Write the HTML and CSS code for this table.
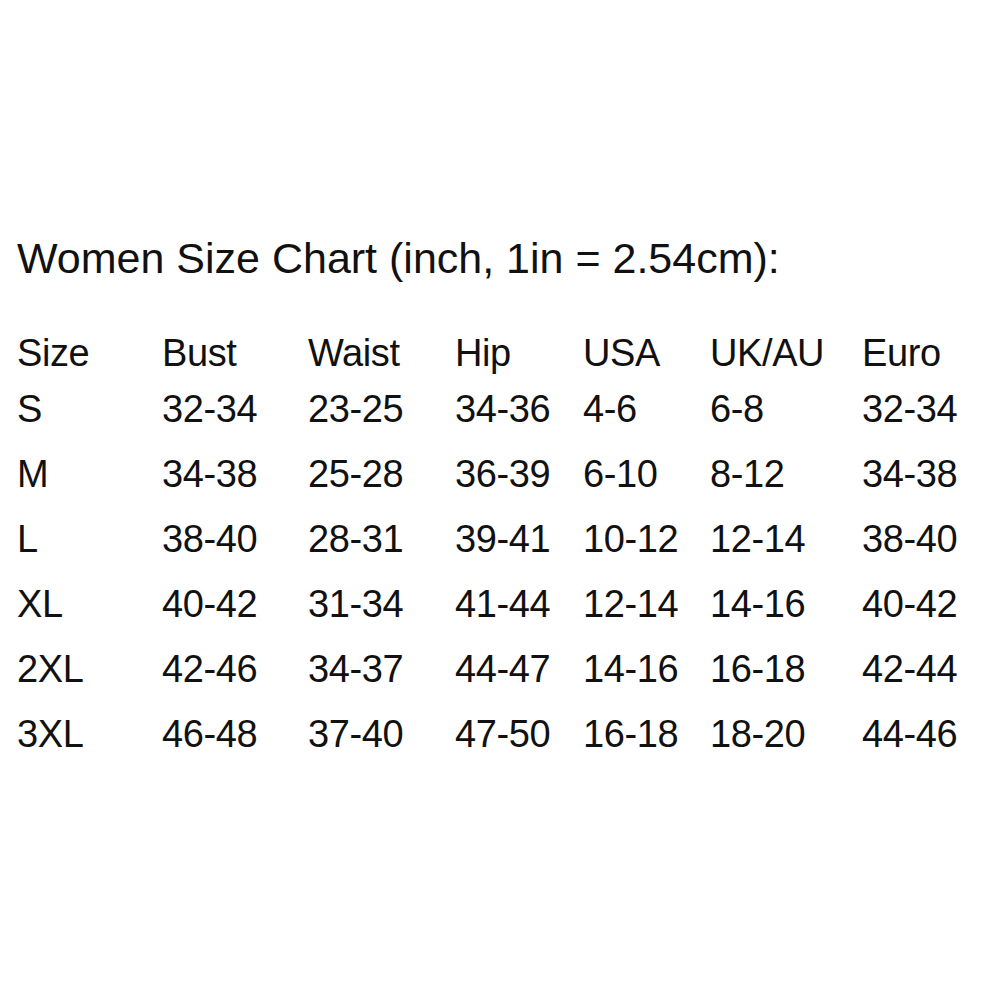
FILE: index.html
```html
<!DOCTYPE html>
<html>
<head>
<meta charset="utf-8">
<link rel="stylesheet" href="styles.css">
</head>
<body>
<div class="page">
  <h1 class="title">Women Size Chart (inch, 1in = 2.54cm):</h1>
  <div class="chart">
    <div class="row head"><span>Size</span><span>Bust</span><span>Waist</span><span>Hip</span><span>USA</span><span>UK/AU</span><span>Euro</span></div>
    <div class="row"><span>S</span><span>32-34</span><span>23-25</span><span>34-36</span><span>4-6</span><span>6-8</span><span>32-34</span></div>
    <div class="row"><span>M</span><span>34-38</span><span>25-28</span><span>36-39</span><span>6-10</span><span>8-12</span><span>34-38</span></div>
    <div class="row"><span>L</span><span>38-40</span><span>28-31</span><span>39-41</span><span>10-12</span><span>12-14</span><span>38-40</span></div>
    <div class="row"><span>XL</span><span>40-42</span><span>31-34</span><span>41-44</span><span>12-14</span><span>14-16</span><span>40-42</span></div>
    <div class="row"><span>2XL</span><span>42-46</span><span>34-37</span><span>44-47</span><span>14-16</span><span>16-18</span><span>42-44</span></div>
    <div class="row"><span>3XL</span><span>46-48</span><span>37-40</span><span>47-50</span><span>16-18</span><span>18-20</span><span>44-46</span></div>
  </div>
</div>
</body>
</html>
```

FILE: styles.css
```css
html, body {
  margin: 0;
  padding: 0;
  background: #ffffff;
}
.page {
  padding: 237px 0 0 17px;
  font-family: "Liberation Sans", Arial, sans-serif;
  color: #111111;
}
.title {
  margin: 0 0 50px 0;
  font-size: 43px;
  line-height: 43px;
  font-weight: normal;
}
.chart {
  display: flex;
  flex-direction: column;
}
.row {
  display: grid;
  grid-template-columns: 145px 146px 147px 128px 127px 152px auto;
  font-size: 38px;
  line-height: 65px;
  letter-spacing: -0.4px;
  white-space: nowrap;
}
.row.head {
  line-height: 47px;
}
```
